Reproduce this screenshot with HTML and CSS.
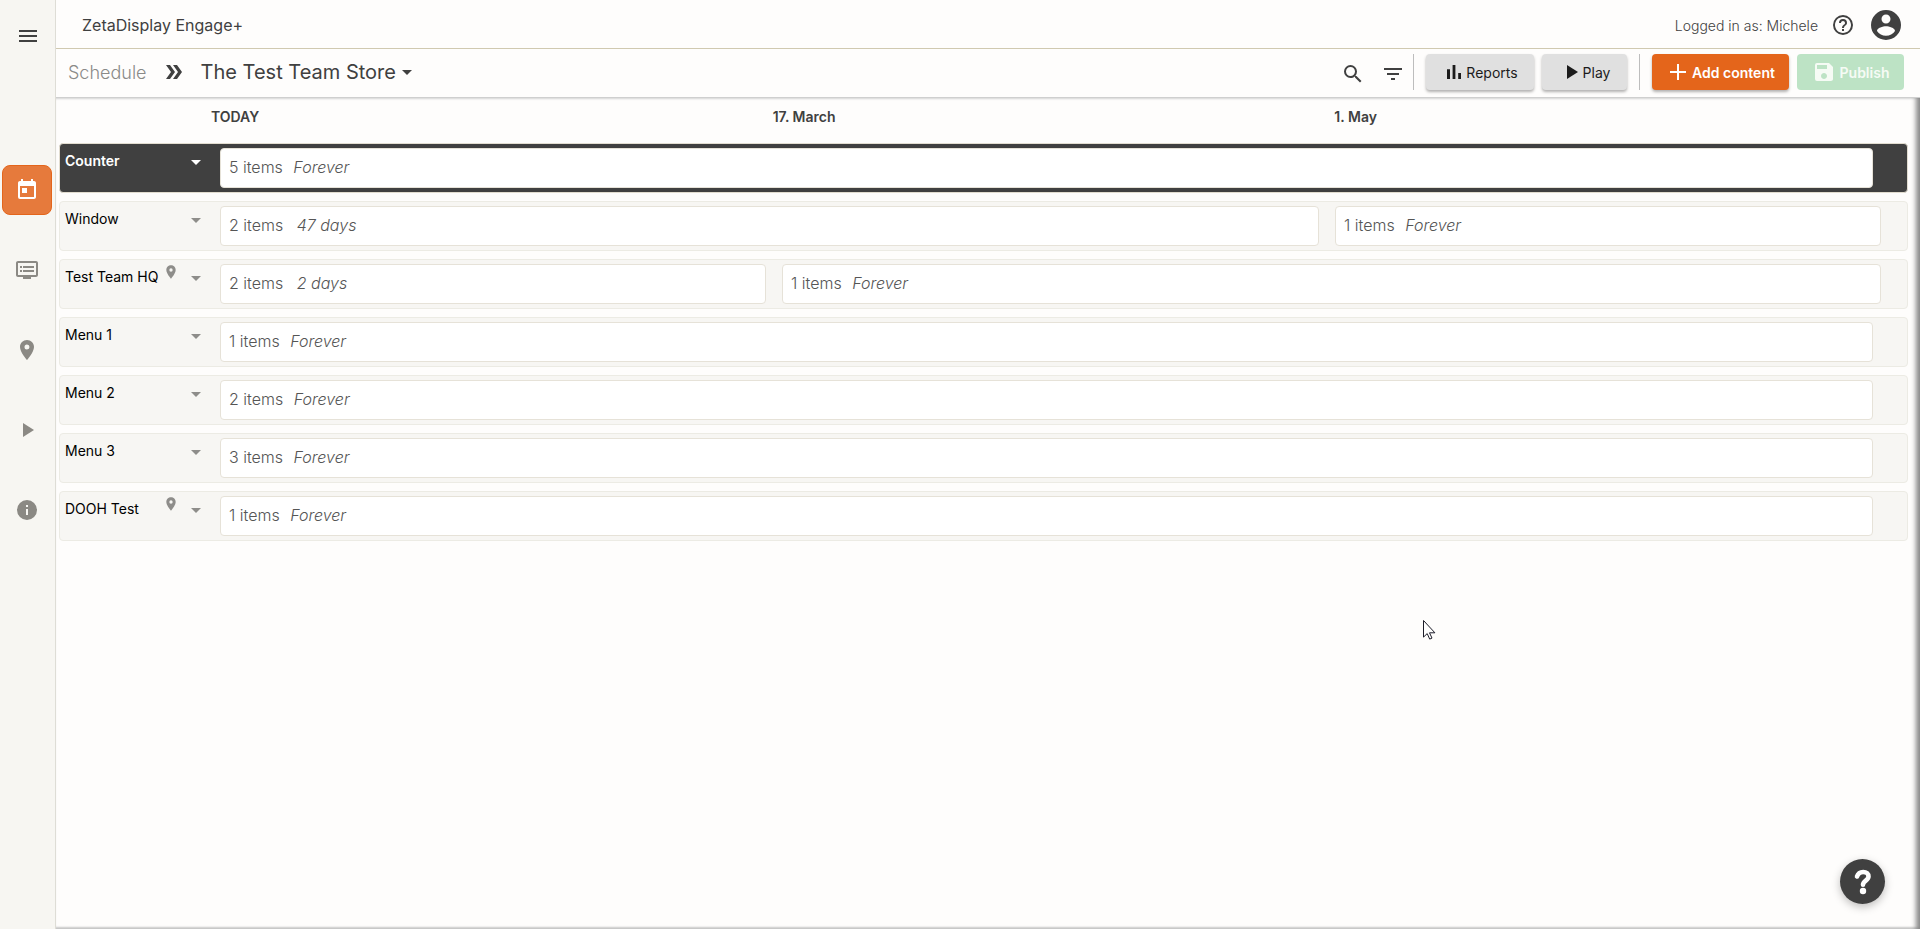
FILE: index.html
```html
<!DOCTYPE html>
<html lang="en">
<head>
<meta charset="utf-8">
<title>ZetaDisplay Engage+</title>
<link rel="stylesheet" href="styles.css">
</head>
<body>
<svg class="defs" aria-hidden="true">
  <symbol id="caret" viewBox="0 0 10 5"><path d="M0 0h10L5 5z"/></symbol>
  <symbol id="place" viewBox="0 0 24 24"><path d="M12 2C8.130 2 5 5.130 5 9c0 5.250 7 13 7 13s7-7.750 7-13c0-3.870-3.130-7-7-7zm0 9.500a2.500 2.500 0 1 1 0-5 2.500 2.500 0 0 1 0 5z"/></symbol>
  <symbol id="play" viewBox="0 0 24 24"><path d="M8 5v14l11-7z"/></symbol>
</svg>
<div class="app">
  <nav class="sidebar" aria-label="Main">
    <button class="menu" aria-label="Menu"><svg class="icon" viewBox="0 0 24 24"><path d="M3 18h18v-2H3v2zm0-5h18v-2H3v2zm0-7v2h18V6H3z"/></svg></button>
    <div class="side-items">
      <button class="side-btn active" aria-label="Schedule"><svg class="icon" viewBox="0 0 24 24"><path d="M19 3h-1V1h-2v2H8V1H6v2H5c-1.110 0-1.990.9-1.990 2L3 19a2 2 0 0 0 2 2h14c1.100 0 2-.9 2-2V5c0-1.100-.9-2-2-2zm0 16H5V8h14v11zM7 10h5v5H7z"/></svg></button>
      <button class="side-btn" aria-label="Displays"><svg class="icon" viewBox="0 0 24 24"><path d="M21 3H3c-1.100 0-2 .9-2 2v12c0 1.100.9 2 2 2h5v2h8v-2h5c1.100 0 1.990-.9 1.990-2L23 5c0-1.100-.9-2-2-2zm0 14H3V5h18v12zm-2-9H8v2h11V8zm0 4H8v2h11v-2zM7 8H5v2h2V8zm0 4H5v2h2v-2z"/></svg></button>
      <button class="side-btn" aria-label="Locations"><svg class="icon"><use href="#place"/></svg></button>
      <button class="side-btn" aria-label="Play"><svg class="icon"><use href="#play"/></svg></button>
      <button class="side-btn" aria-label="Information"><svg class="icon" viewBox="0 0 24 24"><path d="M12 2a10 10 0 1 0 0 20 10 10 0 0 0 0-20zm1 15h-2v-6h2v6zm0-8h-2V7h2v2z"/></svg></button>
    </div>
  </nav>
  <div class="page">
    <header class="topbar">
      <span class="brand">ZetaDisplay Engage+</span>
      <span class="user">Logged in as: Michele</span>
      <button class="help" aria-label="Help"><svg class="icon" viewBox="0 0 24 24"><path d="M11 18h2v-2h-2v2zm1-16a10 10 0 1 0 0 20 10 10 0 0 0 0-20zm0 18c-4.410 0-8-3.590-8-8s3.590-8 8-8 8 3.590 8 8-3.590 8-8 8zm0-14a4 4 0 0 0-4 4h2c0-1.100.9-2 2-2s2 .9 2 2c0 2-3 1.750-3 5h2c0-2.250 3-2.500 3-5a4 4 0 0 0-4-4z"/></svg></button>
      <button class="avatar" aria-label="Account"><svg class="icon-lg" viewBox="0 0 24 24"><path d="M12 2a10 10 0 1 0 0 20 10 10 0 0 0 0-20zm0 3c1.660 0 3 1.340 3 3s-1.340 3-3 3-3-1.340-3-3 1.340-3 3-3zm0 14.200a7.200 7.200 0 0 1-6-3.220c.03-1.990 4-3.080 6-3.080 1.990 0 5.970 1.090 6 3.080a7.200 7.200 0 0 1-6 3.220z"/></svg></button>
    </header>
    <div class="toolbar">
      <a class="crumb" href="#">Schedule</a>
      <svg class="chevrons" viewBox="0 0 16 14"><path d="M0 0h4l5 7-5 7H0l5-7zM7 0h4l5 7-5 7H7l5-7z"/></svg>
      <button class="store">The Test Team Store<svg class="caret"><use href="#caret"/></svg></button>
      <div class="tools">
        <button class="tool" aria-label="Search"><svg class="icon" viewBox="0 0 24 24"><path d="M15.500 14h-.79l-.28-.27A6.470 6.470 0 0 0 16 9.500 6.500 6.500 0 1 0 9.500 16c1.610 0 3.090-.59 4.230-1.570l.27.28v.79l5 4.990L20.490 19l-4.990-5zm-6 0C7.010 14 5 11.990 5 9.500S7.010 5 9.500 5 14 7.010 14 9.500 11.990 14 9.500 14z"/></svg></button>
        <button class="tool" aria-label="Filter"><svg class="icon" viewBox="0 0 24 24"><path d="M10 18h4v-2h-4v2zM3 6v2h18V6H3zm3 7h12v-2H6v2z"/></svg></button>
      </div>
      <div class="group">
        <button class="btn reports"><svg class="icon" viewBox="0 0 24 24"><path d="M5 9.200h3V19H5zM10.600 5h2.800v14h-2.800zm5.600 8H19v6h-2.800z"/></svg>Reports</button>
        <button class="btn play"><svg class="icon"><use href="#play"/></svg>Play</button>
      </div>
      <div class="group">
        <button class="btn add"><svg class="icon" viewBox="0 0 24 24"><path d="M20 13h-7v7h-2v-7H4v-2h7V4h2v7h7z"/></svg>Add content</button>
        <button class="btn publish" disabled><svg class="icon" viewBox="0 0 24 24"><path d="M17 3H5a2 2 0 0 0-2 2v14a2 2 0 0 0 2 2h14c1.100 0 2-.9 2-2V7l-4-4zm-5 16c-1.660 0-3-1.340-3-3s1.340-3 3-3 3 1.340 3 3-1.340 3-3 3zm3-10H5V5h10v4z"/></svg>Publish</button>
      </div>
    </div>
    <main class="schedule">
      <div class="dates"><span>TODAY</span><span>17. March</span><span>1. May</span></div>
      <section class="row selected">
        <button class="label"><span>Counter</span><svg class="caret"><use href="#caret"/></svg></button>
        <div class="track single"><div class="slot">5 items <em>Forever</em></div></div>
      </section>
      <section class="row">
        <button class="label"><span>Window</span><svg class="caret"><use href="#caret"/></svg></button>
        <div class="track"><div class="slot long">2 items <em class="days">47 days</em></div><div class="slot">1 items <em>Forever</em></div></div>
      </section>
      <section class="row">
        <button class="label"><span>Test Team HQ</span><svg class="pin"><use href="#place"/></svg><svg class="caret"><use href="#caret"/></svg></button>
        <div class="track"><div class="slot">2 items <em class="days">2 days</em></div><div class="slot long">1 items <em>Forever</em></div></div>
      </section>
      <section class="row">
        <button class="label"><span>Menu 1</span><svg class="caret"><use href="#caret"/></svg></button>
        <div class="track single"><div class="slot">1 items <em>Forever</em></div></div>
      </section>
      <section class="row">
        <button class="label"><span>Menu 2</span><svg class="caret"><use href="#caret"/></svg></button>
        <div class="track single"><div class="slot">2 items <em>Forever</em></div></div>
      </section>
      <section class="row">
        <button class="label"><span>Menu 3</span><svg class="caret"><use href="#caret"/></svg></button>
        <div class="track single"><div class="slot">3 items <em>Forever</em></div></div>
      </section>
      <section class="row">
        <button class="label"><span>DOOH Test</span><svg class="pin"><use href="#place"/></svg><svg class="caret"><use href="#caret"/></svg></button>
        <div class="track single"><div class="slot">1 items <em>Forever</em></div></div>
      </section>
    </main>
  </div>
</div>
<button class="fab" aria-label="Support"><svg viewBox="0 0 18 26"><path d="M3 7.500C4 4.500 6.500 3 9.200 3c3.400 0 5.300 1.900 5.300 4.500 0 4-5.500 4.200-5.500 8.300" fill="none" stroke="currentColor" stroke-width="4.600" stroke-linecap="round"/><circle cx="9" cy="22" r="3.200"/></svg></button>
<svg class="cursor" viewBox="0 0 13 20" aria-hidden="true"><path d="M.5.500v16.600l3.700-3.500 2.500 5.500 2.300-1-2.500-5.300h5.400z" fill="#fff" stroke="#1c1c28"/></svg>
</body>
</html>
```
FILE: styles.css
```css
* { box-sizing: border-box; }

body {
  margin: 0;
  background: #fefdfc;
  color: #404040;
  font-family: Inter, "Open Sans", sans-serif;
  font-size: 16px;
}

button {
  margin: 0;
  padding: 0;
  border: 0;
  background: none;
  color: inherit;
  font: inherit;
  cursor: pointer;
}

svg { display: block; flex: none; fill: currentColor; }
.defs { position: absolute; width: 0; height: 0; }
.icon { width: 24px; height: 24px; }
.icon-lg { width: 36px; height: 36px; }
.caret { width: 10px; height: 5px; }

.app { display: flex; min-height: 100vh; }

.sidebar {
  flex: none;
  width: 56px;
  border-right: 1px solid #deddd6;
  background: #f7f6f2;
}
.menu { display: block; margin: 24px 0 0 16px; }
.side-items {
  display: flex;
  flex-direction: column;
  gap: 30px;
  margin: 117px 0 0 2px;
}
.side-btn {
  display: grid;
  place-items: center;
  width: 50px;
  height: 50px;
  border: 1px solid transparent;
  border-radius: 8px;
  color: #8b8984;
}
.side-btn.active {
  border-color: #e4651b;
  background: #e67a3c;
  color: #fff;
}

.page { flex: 1; display: flex; flex-direction: column; min-width: 0; }

.topbar {
  display: flex;
  align-items: center;
  height: 49px;
  padding: 2px 16px 0 26px;
  border-bottom: 1px solid #d0c9b0;
}
.brand { flex: 1; }
.user { margin-right: 13px; font-size: 14px; font-weight: 300; }
.avatar { margin-left: 13px; }

.toolbar {
  display: flex;
  align-items: center;
  height: 48px;
  padding: 0 16px 2px 12px;
  font-size: 20px;
}
.crumb { color: #8a8a88; font-size: 18px; font-weight: 300; text-decoration: none; }
.chevrons { width: 16px; height: 14px; margin: 0 19px; }
.store { display: flex; align-items: center; gap: 6px; }
.tools { display: flex; gap: 16px; margin: 4px 8px 0 auto; }
.group {
  display: flex;
  gap: 8px;
  padding-left: 12px;
  border-left: 1px solid #bdbdbd;
}
.group + .group { margin-left: 12px; }
.btn {
  display: flex;
  align-items: center;
  justify-content: center;
  height: 36px;
  border-radius: 4px;
  background: #e0e0e0;
  box-shadow: 0 2px 3px rgba(0, 0, 0, .3);
  color: #1c1c1c;
  font-size: 14px;
}
.reports { width: 108px; }
.play { width: 85px; }
.add { width: 137px; gap: 2px; background: #e4651b; color: #fff; font-weight: 600; }
.publish { width: 107px; gap: 4px; background: #bde3c5; box-shadow: none; color: #f6fbf5; font-weight: 600; }

.schedule {
  flex: 1;
  padding: 0 12px 0 3px;
  border-top: 1px solid #cfcfcf;
  box-shadow: inset -7px 0 5px -3px #888, inset 0 2px 2px -1px #e0e0e0, inset 0 -3px 2px -1px #ccc;
}
.dates {
  display: flex;
  height: 45px;
  padding: 10px 12px 0 152px;
  font-size: 14px;
  font-weight: 600;
  line-height: 18px;
}
.dates span { flex: 1; }

.row {
  display: flex;
  height: 50px;
  margin-bottom: 8px;
  padding: 4px;
  border: 1px solid #ecebe4;
  border-radius: 4px;
  background: #f7f6f3;
}
.row.selected { border-color: #e2ddd0; background: #404040; }
.label {
  display: flex;
  align-items: flex-start;
  width: 156px;
  padding: 0 19px 0 1px;
  color: #000;
  font-size: 14px;
  line-height: 18px;
  text-align: left;
}
.label span { flex: 1; padding-top: 4px; white-space: nowrap; }
.label .caret { margin-top: 12px; color: #8e8d8a; }
.pin { width: 16px; height: 16px; margin-right: 12px; color: #8e8d8a; }
.selected .label, .selected .caret { color: #fff; }
.selected .label { font-weight: 600; }

.track { flex: 1; display: flex; gap: 16px; padding-right: 22px; }
.track.single { padding-right: 30px; }
.slot {
  flex: 1 1 18px;
  min-width: 0;
  padding: 0 8px;
  border: 1px solid #e6e2d8;
  border-radius: 4px;
  background: #fff;
  color: #555;
  font-weight: 300;
  line-height: 36px;
  white-space: nowrap;
}
.slot.long { flex: 2 1 43px; }
.slot em { margin-left: 6px; }
.slot .days { margin-left: 9px; }

.fab {
  position: fixed;
  right: 35px;
  bottom: 25px;
  display: grid;
  place-items: center;
  width: 45px;
  height: 45px;
  border-radius: 50%;
  background: #404040;
  box-shadow: 0 3px 8px rgba(0, 0, 0, .25);
  color: #fff;
}
.fab svg { width: 18px; height: 26px; }
.cursor { position: fixed; left: 1423px; top: 620px; width: 13px; height: 20px; pointer-events: none; }
```
